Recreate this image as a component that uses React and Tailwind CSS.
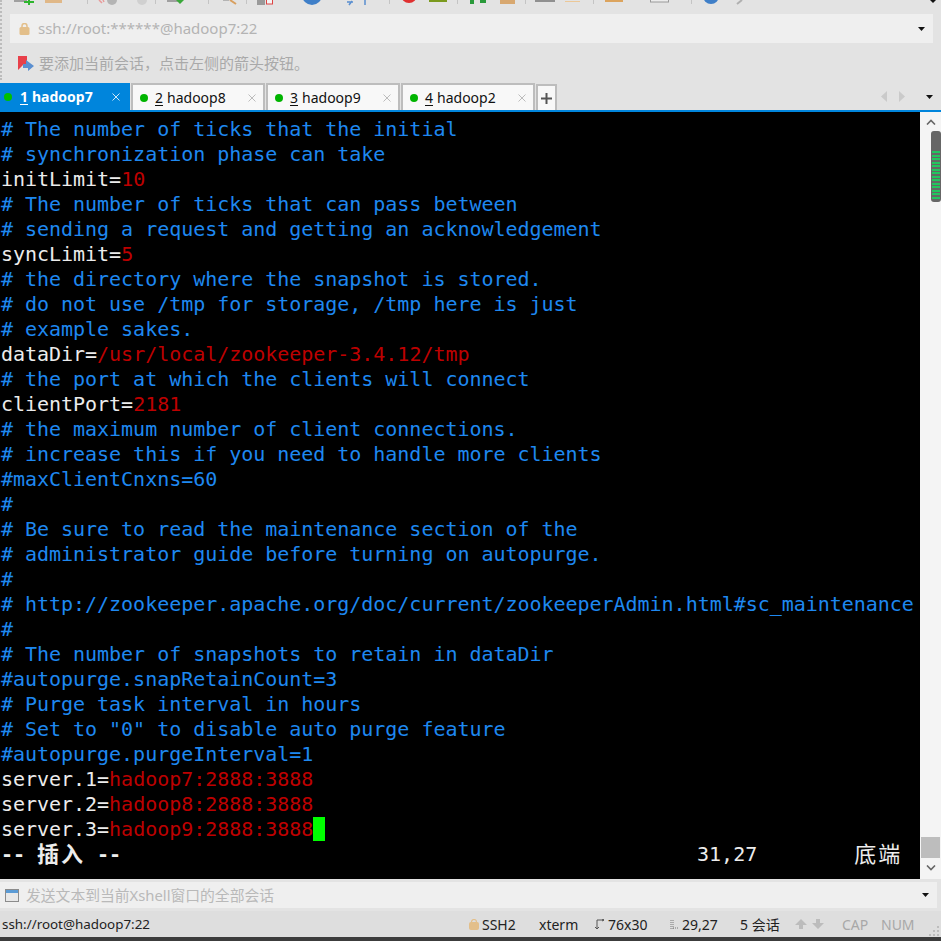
const C = "text-[#1e88f0]";
const W = "text-[#ececec]";
const R = "text-[#bd0000]";

const lines = [
  [[C, "# The number of ticks that the initial"]],
  [[C, "# synchronization phase can take"]],
  [[W, "initLimit="], [R, "10"]],
  [[C, "# The number of ticks that can pass between"]],
  [[C, "# sending a request and getting an acknowledgement"]],
  [[W, "syncLimit="], [R, "5"]],
  [[C, "# the directory where the snapshot is stored."]],
  [[C, "# do not use /tmp for storage, /tmp here is just"]],
  [[C, "# example sakes."]],
  [[W, "dataDir="], [R, "/usr/local/zookeeper-3.4.12/tmp"]],
  [[C, "# the port at which the clients will connect"]],
  [[W, "clientPort="], [R, "2181"]],
  [[C, "# the maximum number of client connections."]],
  [[C, "# increase this if you need to handle more clients"]],
  [[C, "#maxClientCnxns=60"]],
  [[C, "#"]],
  [[C, "# Be sure to read the maintenance section of the"]],
  [[C, "# administrator guide before turning on autopurge."]],
  [[C, "#"]],
  [[C, "# http://zookeeper.apache.org/doc/current/zookeeperAdmin.html#sc_maintenance"]],
  [[C, "#"]],
  [[C, "# The number of snapshots to retain in dataDir"]],
  [[C, "#autopurge.snapRetainCount=3"]],
  [[C, "# Purge task interval in hours"]],
  [[C, '# Set to "0" to disable auto purge feature']],
  [[C, "#autopurge.purgeInterval=1"]],
  [[W, "server.1="], [R, "hadoop7:2888:3888"]],
  [[W, "server.2="], [R, "hadoop8:2888:3888"]],
  [[W, "server.3="], [R, "hadoop9:2888:3888"]],
];

function Tab({ n, name, active, width }) {
  return (
    <div
      className={
        active
          ? "flex h-[27px] items-center bg-[#0085dc] text-white font-bold"
          : "flex h-[27px] items-center bg-[#f8f8f8] text-[#111] border-2 border-b-0 border-[#bdbdbd] ml-px"
      }
      style={{ width }}
    >
      <span className={active ? "ml-[4px] size-2 rounded-full bg-[#00c000]" : "ml-[7px] size-2 rounded-full bg-[#00b400]"} />
      <span className={active ? "ml-[8px] underline underline-offset-2" : "ml-[7px] underline underline-offset-2"}>{n}</span>
      <span className="ml-[4px]">{name}</span>
      <svg className={active ? "ml-auto mr-[10px]" : "ml-auto mr-[7px]"} width="8" height="8" viewBox="0 0 8 8">
        <path d="M.5 .5l7 7M7.5 .5l-7 7" stroke={active ? "#d0e8f8" : "#bcbcbc"} strokeWidth="1" fill="none" />
      </svg>
    </div>
  );
}

function Caret({ className }) {
  return (
    <svg className={className} width="7" height="4" viewBox="0 0 7 4">
      <path d="M0 0h7L3.5 4z" fill="#111" />
    </svg>
  );
}

function ToolbarIcons() {
  return (
    <svg width="941" height="9" viewBox="0 0 941 9" className="block">
      <rect x="14" y="0" width="13" height="2" fill="#a0a0a0" />
      <path d="M29 0v5M24 2h10" stroke="#2eb52e" strokeWidth="2" />
      <rect x="45" y="0" width="17" height="3" fill="#e0b888" />
      <path d="M87.5 0v4M155.5 0v4M208.5 0v4M246.5 0v4M389.5 0v4M457.5 0v4M525.5 0v4M593.5 0v4M691.5 0v4" stroke="#c4c4c4" />
      <path d="M99 0l3 3M103 0l1 2" stroke="#e89a9a" strokeWidth="1.5" />
      <circle cx="112" cy="0" r="5" fill="#b4b4b4" />
      <circle cx="142" cy="0" r="5" fill="#d0d0d0" />
      <rect x="167" y="0" width="11" height="2" fill="#a0a0a0" />
      <path d="M176 0h8l-4 4z" fill="#3aa83a" />
      <path d="M223 0h6" stroke="#b4b4b4" strokeWidth="2" />
      <path d="M230 0l6 4" stroke="#d8a060" strokeWidth="2" />
      <rect x="257" y="0" width="8" height="5" fill="#9a9a9a" />
      <rect x="266.5" y="-1" width="6" height="5" fill="#f4f4f4" stroke="#dd4444" />
      <circle cx="312" cy="-5" r="10" fill="#3f7fc8" />
      <path d="M347 2h6M352 1l-3 4M365 0v5" stroke="#5a8fd0" strokeWidth="1.5" fill="none" />
      <circle cx="409" cy="-5" r="8" fill="#e03030" />
      <rect x="429" y="0" width="18" height="2" fill="#7b9a1e" />
      <rect x="470" y="0" width="4" height="4" fill="#2a9a3a" />
      <rect x="480" y="0" width="6" height="3" fill="#2a9a3a" />
      <rect x="500" y="0" width="15" height="4" fill="#d8a870" />
      <rect x="535" y="0" width="20" height="2" fill="#909090" />
      <rect x="565" y="1" width="15" height="1" fill="#ecc898" />
      <rect x="605" y="0" width="18" height="2" fill="#dca45e" />
      <rect x="650.5" y="-1" width="18" height="3" fill="#ececec" stroke="#9a9a9a" />
      <circle cx="711" cy="-4" r="8" fill="#3f7fc8" />
      <path d="M737 4l5-4" stroke="#b0b0b0" strokeWidth="2" />
      <path d="M930 0h6l-3 3z" fill="#111" />
    </svg>
  );
}

export default function App() {
  return (
    <div className="relative flex h-[941px] w-[941px] flex-col overflow-hidden bg-[#e3e3e3] font-['Noto_Sans','Noto_Sans_CJK_SC',sans-serif] text-[14px]">
      <div className="absolute top-0 left-0 h-[80px] border-l-2 border-dotted border-[#bcbcbc]" />

      {/* Toolbar leftovers */}
      <div className="h-[14px] shrink-0">
        <ToolbarIcons />
      </div>

      {/* Address bar */}
      <div className="ml-[10px] mr-[8px] flex h-[29px] shrink-0 items-center bg-[#efefef]">
        <svg className="ml-[9px]" width="11" height="12" viewBox="0 0 11 12">
          <rect x="0.5" y="4" width="10" height="8" rx="1.5" fill="#e3bf8a" />
          <path d="M3 5V3a2.5 2.5 0 0 1 5 0v2" fill="none" stroke="#e3bf8a" strokeWidth="1.5" />
        </svg>
        <span className="ml-[8px] text-[15px] text-[#b4b4b4]">ssh://root:******@hadoop7:22</span>
        <Caret className="ml-auto mr-[8px]" />
      </div>

      {/* Session hint */}
      <div className="flex h-[40px] shrink-0 items-center pl-[18px]">
        <svg width="17" height="17" viewBox="0 0 17 17">
          <path d="M0 1h9v11l-4-2-5 5z" fill="#e8404a" />
          <path d="M8 5l8 6-6 5v-3H5V9h3z" fill="#5b8fd0" />
        </svg>
        <span className="ml-[4px] text-[15px] text-[#a9a9a9]">要添加当前会话，点击左侧的箭头按钮。</span>
      </div>

      {/* Tabs */}
      <div className="flex h-[27px] shrink-0 items-stretch text-[14px]">
        <Tab n="1" name="hadoop7" active width={130} />
        <Tab n="2" name="hadoop8" width={134} />
        <Tab n="3" name="hadoop9" width={134} />
        <Tab n="4" name="hadoop2" width={134} />
        <div className="ml-px flex h-[26px] w-[21px] self-end items-center justify-center border-2 border-b-0 border-[#bdbdbd] bg-[#f8f8f8]">
          <svg width="11" height="11" viewBox="0 0 11 11">
            <path d="M5.5 0v11M0 5.5h11" stroke="#555" strokeWidth="2" />
          </svg>
        </div>
        <div className="ml-auto flex items-center">
          <svg width="6" height="11" viewBox="0 0 6 11"><path d="M6 0v11L0 5.5z" fill="#cacaca" /></svg>
          <svg className="ml-[12px]" width="6" height="11" viewBox="0 0 6 11"><path d="M0 0v11l6-5.5z" fill="#cacaca" /></svg>
          <Caret className="ml-[21px] mr-[8px]" />
        </div>
      </div>
      <div className="h-[2px] shrink-0 bg-[#0085dc]" />

      {/* Terminal + scrollbar */}
      <div className="flex h-[767px] shrink-0">
        <div className="w-[920px] overflow-hidden bg-black pt-[5px] pl-px font-['DejaVu_Sans_Mono',monospace] text-[20px] leading-[25px] tracking-[-0.03px] whitespace-pre">
          {lines.map((parts, i) => (
            <div key={i} className="h-[25px]">
              {parts.map(([color, text], j) => (
                <span key={j} className={color}>{text}</span>
              ))}
              {i === lines.length - 1 && (
                <span className="inline-block h-[24px] w-[12px] bg-[#00ff00] align-top" />
              )}
            </div>
          ))}
          <div className="flex h-[25px] items-center text-[#ececec]">
            <span className="font-bold">-- </span>
            <span className="w-[48px] -translate-y-[2px] font-['Noto_Sans_CJK_SC',sans-serif] text-[22px] font-bold tracking-[2px]">插入</span>
            <span className="font-bold"> --</span>
            <span className="ml-[576px]">31,27</span>
            <span className="ml-[97px] -translate-y-[2px] font-['Noto_Sans_CJK_SC',sans-serif] text-[22px] tracking-[2px]">底端</span>
          </div>
        </div>
        <div className="flex w-[21px] flex-col items-center bg-[#f4f4f4]">
          <svg className="mt-[7px]" width="10" height="6" viewBox="0 0 10 6">
            <path d="M1 5.5L5 1.5l4 4" fill="none" stroke="#666" strokeWidth="1.6" />
          </svg>
          <div className="mt-[6px] flex h-[71px] w-[10px] flex-col gap-[1.5px] self-end overflow-hidden rounded-[3px] bg-[#666] px-[1px] pt-[20px]">
            {Array.from({ length: 14 }).map((_, i) => (
              <div key={i} className="h-[2px] shrink-0 bg-[#22c55e]" />
            ))}
          </div>
          <div className="mt-auto h-[21px] w-[19px] bg-[#bdbdbd]" />
          <svg className="mt-[7px] mb-[8px]" width="10" height="6" viewBox="0 0 10 6">
            <path d="M1 .5l4 4 4-4" fill="none" stroke="#666" strokeWidth="1.6" />
          </svg>
        </div>
      </div>

      {/* Compose bar */}
      <div className="mt-[3px] mr-[4px] flex h-[26px] shrink-0 items-center bg-[#efefef]">
        <svg className="ml-[5px]" width="14" height="13" viewBox="0 0 14 13">
          <rect x="0.5" y="0.5" width="13" height="12" fill="#e8e8e8" stroke="#8c8c8c" />
          <rect x="1" y="1" width="12" height="3" fill="#5b9bd5" />
        </svg>
        <span className="ml-[7px] text-[14.8px] text-[#b9b9b9]">发送文本到当前Xshell窗口的全部会话</span>
        <Caret className="ml-auto mr-[8px]" />
      </div>

      {/* Status bar */}
      <div className="mt-[3px] flex h-[26px] shrink-0 items-center bg-[#dedede] text-[14px] text-[#222]">
        <span className="ml-[2px] w-[467px] text-[13.4px]">ssh://root@hadoop7:22</span>
        <span className="flex w-[70px] items-center">
          <svg width="10" height="11" viewBox="0 0 10 11">
            <rect y="3" width="10" height="8" rx="2" fill="#e3bf8a" />
            <path d="M2.5 4V3a2.5 2.5 0 0 1 5 0v1" fill="none" stroke="#e3bf8a" strokeWidth="1.2" />
          </svg>
          <span className="ml-[3px]">SSH2</span>
        </span>
        <span className="w-[56px]">xterm</span>
        <span className="flex w-[75px] items-center">
          <svg width="9" height="10" viewBox="0 0 9 10">
            <path d="M2 10V1M0 8l2 2 2-2M2 1h7M7 0l2 1-2 1" fill="none" stroke="#555" />
          </svg>
          <span className="ml-[4px]">76x30</span>
        </span>
        <span className="flex w-[70px] items-center">
          <svg width="9" height="9" viewBox="0 0 9 9">
            <path d="M1 0v9M3 0v9M3 8h6" stroke="#777" strokeDasharray="1 1" fill="none" />
          </svg>
          <span className="ml-[3px]">29,27</span>
        </span>
        <span className="w-[55px]">5 会话</span>
        <span className="flex w-[47px] items-center gap-[5px]">
          <svg width="12" height="10" viewBox="0 0 12 10"><path d="M6 0l6 6H8v4H4V6H0z" fill="#bcbcbc" /></svg>
          <svg width="12" height="10" viewBox="0 0 12 10"><path d="M4 0h4v4h4l-6 6-6-6h4z" fill="#bcbcbc" /></svg>
        </span>
        <span className="w-[39px] text-[#a8a8a8]">CAP</span>
        <span className="text-[#a8a8a8]">NUM</span>
        <svg className="ml-auto mr-[1px] self-end mb-[1px]" width="11" height="11" viewBox="0 0 11 11">
          <path d="M8 1h2v2H8zM4 5h2v2H4zM8 5h2v2H8zM0 9h2v2H0zM4 9h2v2H4zM8 9h2v2H8z" fill="#bdbdbd" />
        </svg>
      </div>
      <div className="h-[4px] shrink-0 bg-[#3c3c3c]" />
    </div>
  );
}
